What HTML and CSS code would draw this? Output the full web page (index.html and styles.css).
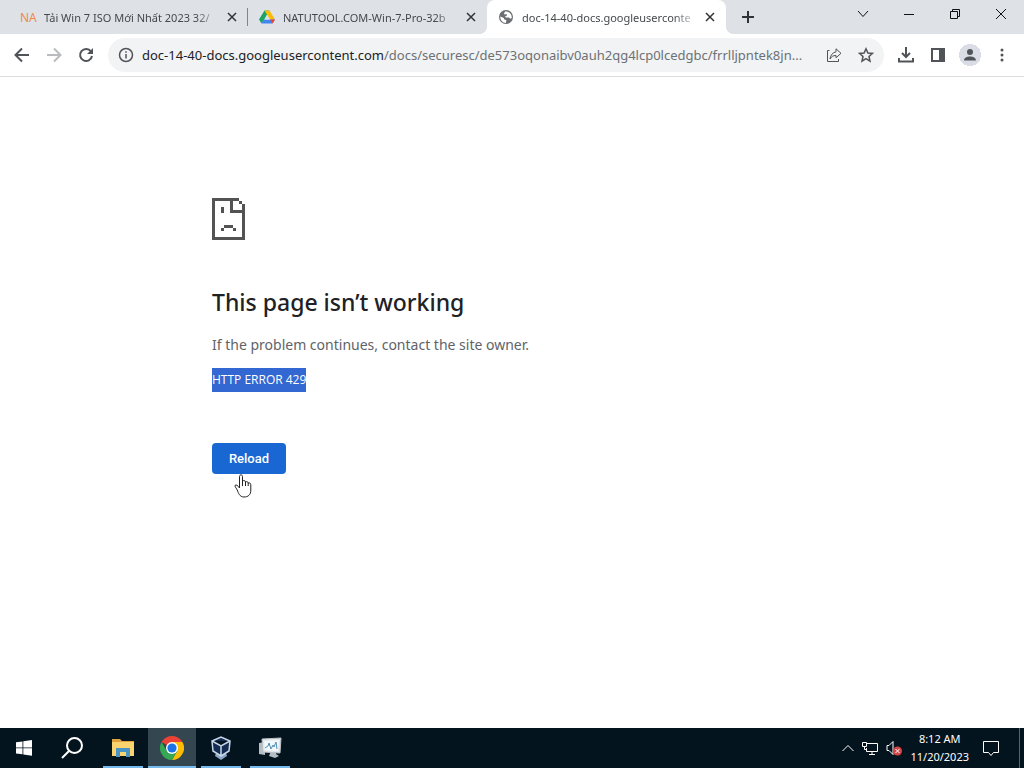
FILE: index.html
```html
<!DOCTYPE html>
<html lang="en">
<head>
    <meta charset="UTF-8">
    <meta name="viewport" content="width=device-width, initial-scale=1.0">
    <title>doc-14-40-docs.googleusercontent.com</title>
    <link rel="stylesheet" href="styles.css">
</head>
<body>

<!-- Tab strip -->
<header class="tab-strip">
    <div class="tab first">
        <span class="na-logo">NA</span>
        <a class="tab-title" href="#">Tải Win 7 ISO Mới Nhất 2023 32/</a>
        <button class="tab-close" aria-label="Close tab"><svg width="10" height="10" viewBox="0 0 10 10"><path d="M1 1l8 8M9 1l-8 8"/></svg></button>
    </div>
    <div class="tab second">
        <svg class="favicon" width="16" height="16" viewBox="0 0 16 16">
            <path fill="#1ba463" d="M5.5 1.5h5L5 11l-2.500 3.500L0 10.500z"/>
            <path fill="#fbbc04" d="M5.500 1.500h5l5.500 9h-5z"/>
            <path fill="#4285f4" d="M5 10.500h11l-2.500 4h-11z"/>
            <path fill="#ea4335" d="M11 10.500h5l-2.500 4z"/>
            <path fill="#dee1e6" d="M8 6l2.700 4.500H5.300z"/>
        </svg>
        <a class="tab-title" href="#">NATUTOOL.COM-Win-7-Pro-32b</a>
        <button class="tab-close" aria-label="Close tab"><svg width="10" height="10" viewBox="0 0 10 10"><path d="M1 1l8 8M9 1l-8 8"/></svg></button>
    </div>
    <div class="tab active">
        <svg class="favicon" width="16" height="16" viewBox="0 0 16 16">
            <circle cx="8" cy="8" r="7" fill="#6b6f73"/>
            <path fill="#fff" d="M2.300 7.500l3.500 1.500.5 1.500 2 .5-.3 3C4.500 14 2 11 2.300 7.500zM7.500 2.200l-1.500 2 .5 1.300 2-.4.5 1.500-2 1 .8 1 3-.2 1.700 1.300 1.200-.8c.5-3-2-6.400-6.200-6.700z"/>
        </svg>
        <a class="tab-title" href="#">doc-14-40-docs.googleuserconte</a>
        <button class="tab-close" aria-label="Close tab"><svg width="10" height="10" viewBox="0 0 10 10"><path d="M1 1l8 8M9 1l-8 8"/></svg></button>
    </div>
    <button class="new-tab" aria-label="New tab"><svg width="12" height="12" viewBox="0 0 12 12"><path d="M6 0v12M0 6h12"/></svg></button>
    <div class="window-buttons">
        <button aria-label="Search tabs"><svg width="12" height="12" viewBox="0 0 12 12"><path d="M1 3l5 5.500L11 3"/></svg></button>
        <button aria-label="Minimize"><svg width="10" height="10" viewBox="0 0 10 10"><path d="M0 5.500h10"/></svg></button>
        <button aria-label="Restore"><svg width="10" height="10" viewBox="0 0 10 10"><path d="M.5 2.500h7v7h-7zM2.500 2.500v-2h7v7h-2"/></svg></button>
        <button aria-label="Close"><svg width="12" height="12" viewBox="0 0 12 12"><path d="M1 1l10 10M11 1L1 11"/></svg></button>
    </div>
</header>

<!-- Toolbar -->
<nav class="toolbar">
    <button class="tool" aria-label="Back"><svg width="16" height="16" viewBox="0 0 16 16"><path d="M15 8H2M8 1.500L1.500 8 8 14.500"/></svg></button>
    <button class="tool disabled" aria-label="Forward" disabled><svg width="16" height="16" viewBox="0 0 16 16"><path d="M1 8h13M8 1.500L14.500 8 8 14.500"/></svg></button>
    <button class="tool" aria-label="Reload page"><svg width="16" height="16" viewBox="0 0 16 16"><path d="M13 4.500A6 6 0 1 0 14 9"/><path class="solid" d="M15 1v6H9z"/></svg></button>
    <div class="address-bar">
        <button class="site-info" aria-label="Site information"><svg width="16" height="16" viewBox="0 0 16 16"><circle cx="8" cy="8" r="6.500"/><path d="M8 7v4.500M8 4.200v1.600"/></svg></button>
        <a class="url" href="#"><b>doc-14-40-docs.googleusercontent.com</b>/docs/securesc/de573oqonaibv0auh2qg4lcp0lcedgbc/frrlljpntek8jn...</a>
        <button class="share" aria-label="Share"><svg width="16" height="16" viewBox="0 0 16 16"><path d="M3.500 3.500h-2v11h11V12M10 1.800l5 4.500-5 4.500V8.500C7 8.500 5.500 9.500 4 12c.3-3.500 2.500-6.500 6-7.200z"/></svg></button>
        <button class="bookmark" aria-label="Bookmark this tab"><svg width="16" height="16" viewBox="0 0 16 16"><path d="M8 1.800l1.900 4.200 4.600.4-3.500 3.100 1 4.600L8 11.700l-4 2.400 1-4.600-3.500-3.100L6.100 6z"/></svg></button>
    </div>
    <button class="tool" aria-label="Downloads"><svg width="16" height="16" viewBox="0 0 16 16"><path d="M8 0v9M4 6l4 4 4-4M1 11v3.500h14V11"/></svg></button>
    <button class="tool" aria-label="Side panel"><svg width="16" height="16" viewBox="0 0 16 16"><path d="M2 2h12v12H2z"/><path class="solid" d="M9 2h5v12H9z"/></svg></button>
    <button class="tool profile" aria-label="Profile"><svg width="16" height="16" viewBox="0 0 16 16"><path class="solid" d="M8 2a3 3 0 1 1 0 6 3 3 0 0 1 0-6zM2 13.500c0-5.500 12-5.500 12 0z"/></svg></button>
    <button class="tool menu" aria-label="Menu"><svg width="16" height="16" viewBox="0 0 16 16"><circle class="solid" cx="8" cy="3" r="1.500"/><circle class="solid" cx="8" cy="8" r="1.500"/><circle class="solid" cx="8" cy="13" r="1.500"/></svg></button>
</nav>

<main class="error-page">
    <div class="error-content">
        <!-- Sad page, drawn on a 3px grid -->
        <svg class="sad-page" width="33" height="42" viewBox="0 0 11 14" shape-rendering="crispEdges">
            <path d="M0 0h9v1H7v3h4v10H0zM1 1v12h9V5H6V1zM9 1h1v1H9zM10 2h1v2h-1zM3 3h1v2H3zM4 9h3v1H4zM3 10h1v1H3zM7 10h1v1H7z" fill-rule="evenodd"/>
        </svg>
        <h1>This page isn’t working</h1>
        <p>If the problem continues, contact the site owner.</p>
        <div class="error-code"><span>HTTP ERROR 429</span></div>
        <div class="reload-row">
            <button class="reload-button">Reload</button>
            <svg class="cursor" width="18" height="24" viewBox="0 0 18 24">
                <path d="M5.500 14V2.500c0-2.200 3-2.200 3 0V7c1-1 3-.5 3 1 1-.8 2.500-.3 2.700 1 1.300-.5 2.600.2 2.600 1.700V16c0 5-2.800 7-6.800 7-4.500 0-5.500-4-6.800-7-.6-1.500-2.200-3-2.200-4 0-1.700 2.200-1.500 4.500 2zM8.500 7v5M11.500 8v4M14.200 9v3"/>
            </svg>
        </div>
    </div>
</main>

<!-- Windows taskbar -->
<footer class="taskbar">
    <button class="task" aria-label="Start"><svg width="16" height="16" viewBox="0 0 16 16"><path fill="#fff" d="M0 2.300L6.500 1.400v6H0zM7.300 1.300L16 0v7.400H7.300zM0 8.200h6.500v6.100L0 13.400zM7.300 8.200H16v7.500l-8.700-1.200z"/></svg></button>
    <button class="task search" aria-label="Search"><svg width="22" height="22" viewBox="0 0 22 22"><path fill="none" stroke="#fff" stroke-width="2" d="M21 8.500a7.500 7.500 0 1 0-15 0 7.500 7.500 0 0 0 15 0zM8 14l-7 7"/></svg></button>
    <button class="task running" aria-label="File Explorer"><svg width="22" height="20" viewBox="0 0 22 20"><path fill="#e0a23c" d="M0 1h8l2 2h12v5H0z"/><path fill="#fbd470" d="M0 4h22v14H0z"/><path fill="#4a94c6" d="M4 10h14v9h-4v-5H8v5H4z"/></svg></button>
    <button class="task running current" aria-label="Google Chrome"><svg width="24" height="24" viewBox="0 0 24 24"><path fill="#ea4335" d="M12 12L1.600 6A12 12 0 0 1 22.400 6z"/><path fill="#fbbc04" d="M12 6h10.400A12 12 0 0 1 12 24l5.200-9z"/><path fill="#34a853" d="M12 24A12 12 0 0 1 1.600 6l5.200 9 10.400 0z"/><circle cx="12" cy="12" r="6" fill="#fff"/><circle cx="12" cy="12" r="4.600" fill="#1a73e8"/></svg></button>
    <button class="task running" aria-label="VirtualBox"><svg width="22" height="24" viewBox="0 0 22 24"><path fill="#8ba6c4" d="M6 17h10l1 3-6 4-6-4z"/><path fill="#142c52" stroke="#c7d7e8" stroke-width="1.500" d="M2 5l9-4 9 4-1 10-8 5-8-5zM2 5l9 5 9-5M11 10v10"/></svg></button>
    <button class="task running" aria-label="Resource Monitor"><svg width="24" height="22" viewBox="0 0 24 22"><path fill="#b4bdc3" d="M1 6l6-1v13l-6-1zM13 14h5v3l3 2-4 2-6-2z"/><path fill="#e3e8eb" stroke="#b9c1c7" d="M4 2l19-1-1 15-17-1z"/><path fill="#f3f8fb" d="M6 4l15-1-1 11-13-1z"/><path fill="none" stroke="#4f8fb5" d="M7 11l3-2 1-3 2 6 2-4 1 2 2-5 1 7"/></svg></button>

    <div class="tray">
        <svg width="12" height="8" viewBox="0 0 12 8"><path d="M.5 7L6 1.500 11.500 7"/></svg>
        <svg width="16" height="14" viewBox="0 0 16 14"><path d="M5 2.500h10.500v8H4.500V7M7 13.500h6M10 11v2M.5 1.500h4v4h-4zM2.500 5.500v3h2"/></svg>
        <svg width="16" height="16" viewBox="0 0 16 16"><path d="M1 5.500h2l4-4v13l-4-4H1z"/><circle cx="11.500" cy="11" r="4.500" fill="#d64545" stroke="none"/><path d="M9.500 9l4 4M13.500 9l-4 4"/></svg>
        <div class="clock">
            <time>8:12 AM</time>
            <time>11/20/2023</time>
        </div>
        <svg width="16" height="17" viewBox="0 0 16 17"><path d="M.5 1.500h15v11h-5L8 15.500l-2.500-3h-5z"/></svg>
    </div>
</footer>

</body>
</html>
```
FILE: styles.css
```css
* {
    box-sizing: border-box;
}
html, body {
    height: 100%;
    margin: 0;
}
body {
    display: flex;
    flex-direction: column;
    background-color: #fff;
    font-family: 'Noto Sans', 'Open Sans', sans-serif;
    font-size: 11px;
    overflow: hidden;
}
button {
    border: none;
    padding: 0;
    background: none;
    font-family: inherit;
    display: flex;
    align-items: center;
    justify-content: center;
    flex-shrink: 0;
}
a {
    color: inherit;
    text-decoration: none;
}
svg {
    display: block;
    flex-shrink: 0;
}

/* Tab strip */
.tab-strip {
    display: flex;
    height: 34px;
    flex-shrink: 0;
    background-color: #dee1e6;
    color: #45494d;
}
.tab {
    display: flex;
    align-items: center;
    width: 239px;
    padding: 0 10px 0 11px;
}
.tab.first {
    width: 248px;
    padding-left: 20px;
    background: linear-gradient(#80868b, #80868b) right 0 center / 1px 18px no-repeat;
}
.tab.active {
    position: relative;
    border-radius: 8px 8px 0 0;
    background-color: #fff;
}
/* curved feet of the active tab */
.tab.active::before,
.tab.active::after {
    content: "";
    position: absolute;
    bottom: 0;
    width: 8px;
    height: 8px;
}
.tab.active::before {
    left: -8px;
    background: radial-gradient(circle at 0 0, transparent 8px, #fff 8px);
}
.tab.active::after {
    right: -8px;
    background: radial-gradient(circle at 100% 0, transparent 8px, #fff 8px);
}
.na-logo {
    width: 16px;
    margin-right: 8px;
    font-size: 12px;
    color: #f08a4b;
}
.favicon {
    margin-right: 8px;
}
.tab-title {
    flex: 1;
    min-width: 0;
    margin-right: 6px;
    overflow: hidden;
    white-space: nowrap;
    -webkit-mask-image: linear-gradient(to left, transparent, #000 24px);
    mask-image: linear-gradient(to left, transparent, #000 24px);
}
.tab-close {
    width: 12px;
    height: 16px;
}
.tab-strip svg:not(.favicon) {
    fill: none;
    stroke: #303336;
    stroke-width: 1.5;
}
.tab-strip .new-tab {
    width: 28px;
    margin-left: 8px;
}
.tab-strip .new-tab svg {
    stroke-width: 2;
}
.window-buttons {
    display: flex;
    margin-left: auto;
    height: 28px;
}
.window-buttons button {
    width: 46px;
}
.tab-strip .window-buttons svg {
    stroke: #111;
    stroke-width: 1;
}

/* Toolbar */
.toolbar {
    display: flex;
    align-items: center;
    height: 43px;
    flex-shrink: 0;
    padding: 0 6px;
    border-bottom: 1px solid #dadce0;
}
.toolbar svg {
    fill: none;
    stroke: #505459;
    stroke-width: 2;
}
.toolbar .solid {
    fill: #505459;
    stroke: none;
}
.tool {
    width: 32px;
    height: 32px;
}
.toolbar .disabled svg {
    stroke: #b9bbbe;
}
.address-bar {
    display: flex;
    align-items: center;
    flex: 1;
    min-width: 0;
    height: 34px;
    margin: 0 6px;
    padding: 0 10px;
    border-radius: 17px;
    background-color: #f1f3f4;
}
.address-bar svg {
    stroke-width: 1.5;
}
.address-bar .share svg {
    stroke-width: 1;
}
.site-info {
    margin-right: 8px;
}
.url {
    flex: 1;
    min-width: 0;
    overflow: hidden;
    white-space: nowrap;
    text-overflow: ellipsis;
    font-size: 13px;
    color: #6d7175;
}
.url b {
    font-weight: normal;
    color: #202124;
}
.share {
    margin: 0 16px 0 8px;
}
.profile {
    background: radial-gradient(circle, #dadde5 11px, transparent 11px);
}

/* Error page */
.error-page {
    flex: 1;
    min-height: 0;
}
.error-content {
    width: 600px;
    max-width: 100%;
    margin: 0 auto;
    padding-top: 121px;
    color: #5f6368;
}
.sad-page {
    fill: #535353;
}
h1 {
    margin: 46px 0 15px;
    font-size: 23px;
    font-weight: 500;
    line-height: 32px;
    color: #202124;
}
p {
    margin: 0 0 11px;
    font-size: 14px;
    line-height: 24px;
}
.error-code {
    margin-bottom: 51px;
    font-family: 'Open Sans', sans-serif;
    font-size: 12px;
    line-height: 24px;
}
.error-code span {
    display: inline-block;
    background-color: #3367d1;
    color: #fff;
}
.reload-row {
    position: relative;
}
.reload-button {
    height: 31px;
    min-width: 74px;
    padding: 0 16px;
    border-radius: 4px;
    background-color: #1967d2;
    color: #fff;
    font-family: Roboto, sans-serif;
    font-size: 13px;
    font-weight: 500;
}
.cursor {
    position: absolute;
    left: 22px;
    top: 31px;
    fill: #fff;
    stroke: #222;
}

/* Taskbar */
.taskbar {
    display: flex;
    gap: 1px;
    height: 40px;
    flex-shrink: 0;
    background-color: #04141e;
    color: #fff;
}
.task {
    width: 48px;
}
.task.search {
    width: 46px;
    margin-right: 3px;
}
.task.running {
    background: linear-gradient(#76b9ed, #76b9ed) center bottom / 40px 2px no-repeat;
}
.task.current {
    background-color: #344750;
    background-size: 48px 2px;
}
.tray {
    display: flex;
    align-items: center;
    gap: 8px;
    margin-left: auto;
    padding-right: 20px;
    border-right: 1px solid #59626b;
    margin-right: 4px;
}
.tray svg {
    fill: none;
    stroke: #fff;
}
.clock {
    display: flex;
    flex-direction: column;
    align-items: center;
    line-height: 18px;
    margin-right: 6px;
}
```
